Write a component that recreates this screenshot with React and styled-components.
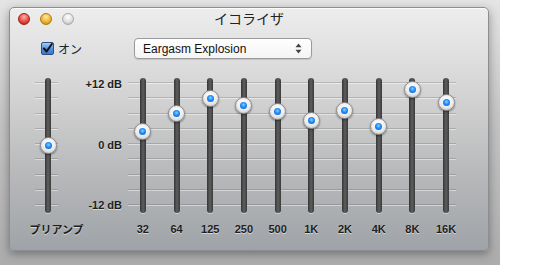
import React from "react";
import styled, { createGlobalStyle } from "styled-components";

const GlobalStyle = createGlobalStyle`
  html, body {
    margin: 0;
    padding: 0;
    background: #ffffff;
  }
  body {
    font-family: "Liberation Sans", "Noto Sans CJK JP", sans-serif;
  }
`;

const Backdrop = styled.div`
  width: 500px;
  height: 265px;
  box-sizing: border-box;
  padding: 7px 0 0 9px;
  background: linear-gradient(to bottom, #e4e4e4 0%, #c4c4c4 45%, #acacac 100%);
  overflow: hidden;
`;

const Window = styled.div`
  width: 480px;
  height: 244px;
  box-sizing: border-box;
  border: 1px solid #8b8e92;
  border-radius: 5px 5px 4px 4px;
  background: linear-gradient(
    to bottom,
    #ededed 0%,
    #e3e3e3 15%,
    #d0d0d0 40%,
    #b8b9bb 68%,
    #9fa3a7 100%
  );
  box-shadow: inset 0 1px 0 rgba(255, 255, 255, 0.8),
    0 3px 10px rgba(0, 0, 0, 0.35);
  display: flex;
  flex-direction: column;
`;

const TitleBar = styled.div`
  height: 21px;
  display: grid;
  grid-template-columns: 1fr auto 1fr;
  align-items: center;
`;

const Lights = styled.div`
  display: flex;
  gap: 10px;
  padding-left: 8px;
`;

const lightColors = {
  close: ["#ffb2a8", "#e0443e", "#a81a14"],
  min: ["#ffe9a0", "#e9b12c", "#b17a0a"],
  zoom: ["#ffffff", "#dcdcdc", "#a9a9a9"],
};

const Light = styled.span`
  width: 12px;
  height: 12px;
  border-radius: 50%;
  box-sizing: border-box;
  border: 1px solid ${(p) => lightColors[p.$kind][2]};
  background: radial-gradient(
    circle at 50% 30%,
    ${(p) => lightColors[p.$kind][0]} 0%,
    ${(p) => lightColors[p.$kind][1]} 60%,
    ${(p) => lightColors[p.$kind][2]} 100%
  );
`;

const Title = styled.div`
  font-family: "Noto Sans CJK JP", sans-serif;
  font-size: 14px;
  color: #222;
  line-height: 21px;
`;

const ControlsRow = styled.div`
  margin-top: 9px;
  height: 21px;
  display: flex;
  align-items: center;
  padding-left: 31px;
`;

const CheckLabel = styled.label`
  width: 93px;
  display: flex;
  align-items: center;
  gap: 4px;
  font-family: "Noto Sans CJK JP", sans-serif;
  font-size: 12px;
  color: #222;
`;

const CheckBox = styled.span`
  width: 13px;
  height: 13px;
  box-sizing: border-box;
  border: 1px solid #2b4f86;
  border-radius: 2px;
  background: linear-gradient(to bottom, #a9cdf5 0%, #5592dc 50%, #3b78cf 100%);
  display: flex;
  align-items: center;
  justify-content: center;
`;

const Select = styled.div`
  width: 178px;
  height: 21px;
  box-sizing: border-box;
  border: 1px solid #9a9a9a;
  border-radius: 4px;
  background: linear-gradient(to bottom, #ffffff 0%, #f4f4f4 100%);
  box-shadow: 0 1px 1px rgba(0, 0, 0, 0.12);
  display: flex;
  align-items: center;
  justify-content: space-between;
  padding: 0 9px 0 8px;
  font-size: 12px;
  color: #111;
`;

const EqArea = styled.div`
  margin-top: 19px;
  display: flex;
  align-items: flex-start;
`;

const SliderColumn = styled.div`
  width: ${(p) => p.$width}px;
  margin-left: ${(p) => p.$offset || 0}px;
  display: flex;
  flex-direction: column;
  align-items: center;
`;

const Stack = styled.div`
  display: grid;
  height: 135px;
  width: 100%;
  & > * {
    grid-area: 1 / 1;
  }
`;

const TickLines = styled.div`
  margin-top: 4px;
  height: 123px;
  width: ${(p) => p.$width}px;
  margin-left: ${(p) => p.$offset || 0}px;
  display: flex;
  flex-direction: column;
  justify-content: space-between;
`;

const Tick = styled.div`
  height: 1px;
  background: rgba(70, 70, 70, 0.22);
  box-shadow: 0 1px 0 rgba(255, 255, 255, 0.45);
`;

const Track = styled.div`
  justify-self: center;
  margin-left: ${(p) => p.$shift || 0}px;
  width: 6px;
  height: 135px;
  border-radius: 3px;
  background: linear-gradient(to right, #353535 0%, #5e5e5e 50%, #3a3a3a 100%);
  box-shadow: 0 1px 0 rgba(255, 255, 255, 0.4);
  position: relative;
`;

const Knob = styled.div`
  position: absolute;
  left: 50%;
  width: 17px;
  height: 17px;
  margin-left: -8.5px;
  margin-top: -8.5px;
  border-radius: 50%;
  box-sizing: border-box;
  border: 1px solid #8c8c8c;
  background: radial-gradient(circle at 50% 35%, #ffffff 0%, #ececec 55%, #bdbdbd 100%);
  box-shadow: 0 1px 2px rgba(0, 0, 0, 0.45);
  display: flex;
  align-items: center;
  justify-content: center;

  &::after {
    content: "";
    width: 7px;
    height: 7px;
    border-radius: 50%;
    background: radial-gradient(circle at 50% 40%, #8fd0ff 0%, #1f8cf5 45%, #0b5bd0 100%);
  }
`;

const ValueLabel = styled.div`
  font-size: 11px;
  font-weight: bold;
  color: #1e1e1e;
  line-height: 13px;
  white-space: nowrap;
  text-shadow: 0 1px 0 rgba(255, 255, 255, 0.55);
  margin-top: 10px;
  margin-left: ${(p) => p.$shift || 0}px;
  font-family: ${(p) =>
    p.$jp ? '"Noto Sans CJK JP", sans-serif' : '"Liberation Sans", sans-serif'};
`;

const Scale = styled.div`
  width: 70px;
  height: 134px;
  box-sizing: border-box;
  padding-right: 6px;
  display: flex;
  flex-direction: column;
  justify-content: space-between;
  align-items: flex-end;
`;

const ScaleLabel = styled.div`
  font-size: 11px;
  font-weight: bold;
  line-height: 13px;
  color: #1e1e1e;
  text-shadow: 0 1px 0 rgba(255, 255, 255, 0.55);
`;

const Bands = styled.div`
  display: grid;
  & > * {
    grid-area: 1 / 1;
  }
`;

const BandRow = styled.div`
  display: flex;
  margin-left: -2px;
`;

const bands = [
  { label: "32", gain: 2.36 },
  { label: "64", gain: 5.9 },
  { label: "125", gain: 8.66 },
  { label: "250", gain: 7.28 },
  { label: "500", gain: 6.1 },
  { label: "1K", gain: 4.33 },
  { label: "2K", gain: 6.3 },
  { label: "4K", gain: 3.15 },
  { label: "8K", gain: 10.6 },
  { label: "16K", gain: 7.87 },
];

const knobTop = (gain) => 65 - (gain * 61) / 12;

const Ticks = ({ width, offset }) => (
  <TickLines $width={width} $offset={offset}>
    {Array.from({ length: 9 }).map((_, i) => (
      <Tick key={i} />
    ))}
  </TickLines>
);

const App = () => {
  return (
    <>
      <GlobalStyle />
      <Backdrop>
        <Window>
          <TitleBar>
            <Lights>
              <Light $kind="close" />
              <Light $kind="min" />
              <Light $kind="zoom" />
            </Lights>
            <Title>イコライザ</Title>
            <div />
          </TitleBar>

          <ControlsRow>
            <CheckLabel>
              <CheckBox>
                <svg width="11" height="11" viewBox="0 0 11 11">
                  <path
                    d="M2 5.5 L4.6 8.5 L9.8 1"
                    fill="none"
                    stroke="#111"
                    strokeWidth="2"
                    strokeLinecap="round"
                    strokeLinejoin="round"
                  />
                </svg>
              </CheckBox>
              オン
            </CheckLabel>
            <Select>
              Eargasm Explosion
              <svg width="7" height="11" viewBox="0 0 7 11">
                <path d="M3.5 0.5 L6.5 4.2 L0.5 4.2 Z" fill="#444" />
                <path d="M3.5 10.5 L6.5 6.8 L0.5 6.8 Z" fill="#444" />
              </svg>
            </Select>
          </ControlsRow>

          <EqArea>
            <SliderColumn $width={23} $offset={25}>
              <Stack>
                <Ticks width={23} />
                <Track $shift={3}>
                  <Knob style={{ top: knobTop(-0.4) }} />
                </Track>
              </Stack>
              <ValueLabel $jp $shift={20}>
                プリアンプ
              </ValueLabel>
            </SliderColumn>

            <Scale>
              <ScaleLabel>+12 dB</ScaleLabel>
              <ScaleLabel>0 dB</ScaleLabel>
              <ScaleLabel>-12 dB</ScaleLabel>
            </Scale>

            <Bands>
              <Ticks width={328} />
              <BandRow>
                {bands.map((band) => (
                  <SliderColumn key={band.label} $width={33.7}>
                    <Stack>
                      <Track>
                        <Knob style={{ top: knobTop(band.gain) }} />
                      </Track>
                    </Stack>
                    <ValueLabel>{band.label}</ValueLabel>
                  </SliderColumn>
                ))}
              </BandRow>
            </Bands>
          </EqArea>
        </Window>
      </Backdrop>
    </>
  );
};

export default App;
